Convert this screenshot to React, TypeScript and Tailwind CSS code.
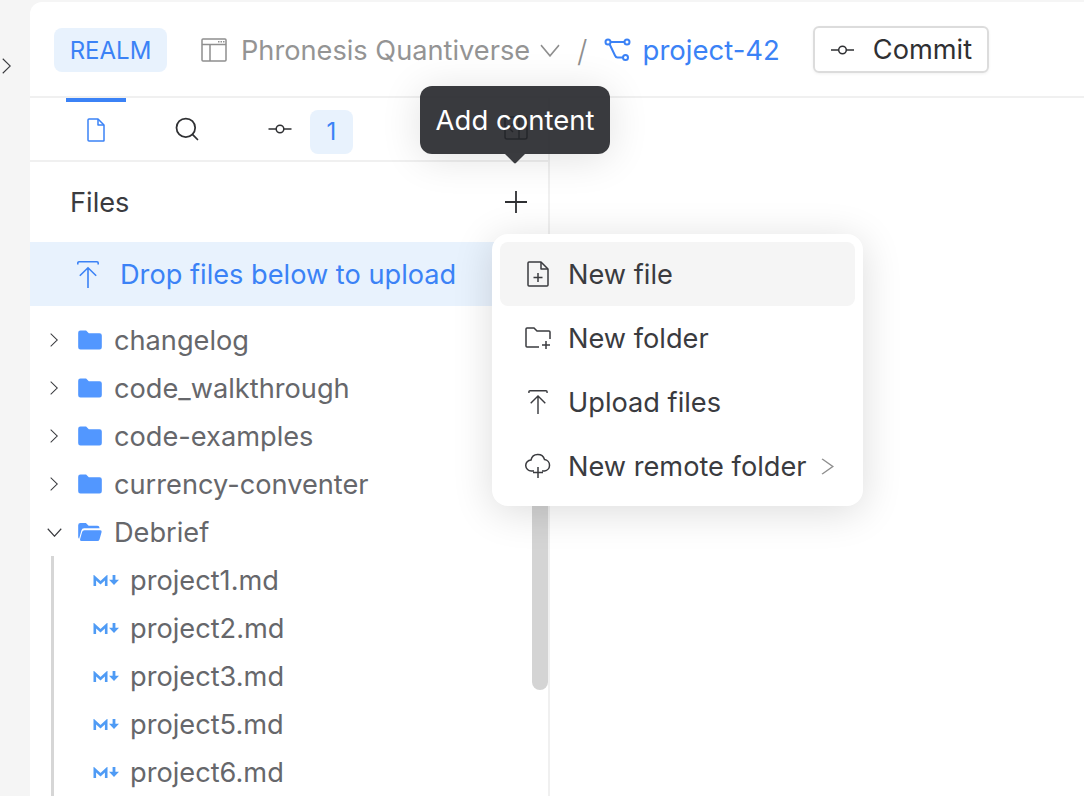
import type { ReactNode } from "react";
import { Search } from "lucide-react";

const SANS = "font-['Inter','Liberation_Sans',sans-serif]";

function CommitIcon({ className = "" }: { className?: string }) {
  return (
    <svg viewBox="0 0 24 12" fill="none" stroke="currentColor" strokeWidth="1.5" className={className}>
      <circle cx="12" cy="6" r="3.8" />
      <path d="M0.5 6h7.500M16 6h7.500" />
    </svg>
  );
}

function UploadIcon({ className = "" }: { className?: string }) {
  return (
    <svg viewBox="0 0 22 27" fill="none" stroke="currentColor" strokeWidth="1.6" className={className}>
      <path d="M.8 3.500V2A1.200 1.200 0 0 1 2 .8h18A1.200 1.200 0 0 1 21.200 2v1.500" />
      <path d="M11 27V7M2.800 14.800 11 6.800l8.200 8" />
    </svg>
  );
}

function Chevron({ dir, className = "" }: { dir: "right" | "down"; className?: string }) {
  if (dir === "down") {
    return (
      <svg viewBox="0 0 20 12" fill="none" stroke="currentColor" strokeWidth="1.5" preserveAspectRatio="none" className={className}>
        <path d="M1 1l9 10 9-10" />
      </svg>
    );
  }
  return (
    <svg viewBox="0 0 12 20" fill="none" stroke="currentColor" strokeWidth="1.5" preserveAspectRatio="none" className={className}>
      <path d="M1 1l10 9-10 9" />
    </svg>
  );
}

function FolderIcon({ open = false }: { open?: boolean }) {
  if (open) {
    return (
      <svg viewBox="0 0 26 22" className="h-[20px] w-[26px] shrink-0">
        <path fill="#5297ff" d="M0 3.500A2.500 2.500 0 0 1 2.500 1h6l3 3h9.500A2.500 2.500 0 0 1 23.500 6.500V7H6.500A3 3 0 0 0 3.600 9.200L1 18.500A3 3 0 0 1 0 16.500Z" />
        <path fill="#5297ff" d="M6.800 9h17.500a1.500 1.500 0 0 1 1.450 1.900l-2.300 8.300A2.500 2.500 0 0 1 21 21H3.500a1.500 1.500 0 0 1-1.450-1.900L4.400 10.800A2.500 2.500 0 0 1 6.800 9Z" />
      </svg>
    );
  }
  return (
    <svg viewBox="0 0 26 22" className="h-[20px] w-[26px] shrink-0">
      <path fill="#5297ff" d="M0 3A2.500 2.500 0 0 1 2.500 .5h6.200l3 3h11.800A2.500 2.500 0 0 1 26 6v13a2.500 2.500 0 0 1-2.500 2.500h-21A2.500 2.500 0 0 1 0 19Z" />
    </svg>
  );
}

function MarkdownIcon() {
  return (
    <svg viewBox="0 0 26 11" className="h-[11px] w-[26px] shrink-0">
      <path fill="none" stroke="#4f9bf5" strokeWidth="2.600" d="M1.800 11V2.500L7.500 7.800l5.700-5.300V11" />
      <path fill="#4f9bf5" d="M19.600 0h2.800v4.800H26L21 10 16 4.800h3.600Z" />
    </svg>
  );
}

function FolderRow({ name, open = false }: { name: string; open?: boolean }) {
  return (
    <div className="flex h-12 items-center">
      <div className="flex w-[32px] shrink-0 justify-end">
        {open ? (
          <Chevron dir="down" className="h-[9px] w-[15px] text-[#3a3b3f]" />
        ) : (
          <Chevron dir="right" className="mr-[4px] h-[14px] w-[8px] text-[#3a3b3f]" />
        )}
      </div>
      <div className="ml-[15px] mr-[11px] flex">
        <FolderIcon open={open} />
      </div>
      <span className="pt-[2px] text-[27.200px] leading-none text-[#66676b]">{name}</span>
    </div>
  );
}

function FileRow({ name }: { name: string }) {
  return (
    <div className="flex h-12 items-center pl-[63px]">
      <MarkdownIcon />
      <span className="ml-[11px] pt-[2px] text-[27.200px] leading-none text-[#66676b]">{name}</span>
    </div>
  );
}

function MenuItem({ icon, label, active = false, arrow = false }: { icon: ReactNode; label: string; active?: boolean; arrow?: boolean }) {
  return (
    <div className={`flex h-16 items-center rounded-[8px] pl-[24px] ${active ? "bg-[#f5f5f5]" : ""}`}>
      <div className="flex w-[28px] justify-center text-[#3a3b3f]">{icon}</div>
      <span className="ml-[16px] pt-[2px] text-[27.200px] leading-none text-[#3a3b3f]">{label}</span>
      {arrow && <Chevron dir="right" className="ml-[14px] h-[17px] w-[13px] text-[#8e8e8e]" />}
    </div>
  );
}

export default function App() {
  return (
    <div className={`${SANS} flex h-[796px] w-[1084px] overflow-hidden bg-[#f5f5f5]`}>
      <div className="flex w-[30px] shrink-0 items-start pl-[2px] pt-[58px]">
        <Chevron dir="right" className="h-[16px] w-[9px] text-[#3a3b3f]" />
      </div>
      <div className="relative mt-[2px] min-w-0 flex-1 rounded-tl-[12px] bg-white">
        <header className="flex h-[96px] items-center border-b-2 border-[#f0f0f0] pt-[2px] pl-[24px]">
          <div className="flex h-[44px] w-[113px] items-center justify-center rounded-[8px] bg-[#e8f2fd] pt-[2px] text-[24px] text-[#3b82f6]">REALM</div>
          <svg viewBox="0 0 26 24" fill="none" stroke="#8f8f8f" strokeWidth="1.500" className="ml-[33px] h-[24px] w-[28px]">
            <rect x="1" y="1" width="24" height="22" rx="1" />
            <path d="M1 6.500h24M9 6.500V23" />
            <path d="M17 3.800h1.500M19.500 3.800H21M22 3.800h1.500" />
          </svg>
          <span className="ml-[13px] pt-[2px] text-[27.200px] text-[#949494]">Phronesis Quantiverse</span>
          <Chevron dir="down" className="ml-[10px] h-[13px] w-[20px] text-[#8f8f8f]" />
          <span className="ml-[17px] pt-[2px] text-[30px] font-light text-[#8f8f8f]">/</span>
          <svg viewBox="0 0 26 24" fill="none" stroke="#3b82f6" strokeWidth="2" className="ml-[16px] h-[24px] w-[27px]">
            <circle cx="3.500" cy="4" r="2.500" />
            <circle cx="22.500" cy="4" r="2.500" />
            <circle cx="21" cy="19.500" r="2.500" />
            <path d="M6 4h14M5 6l5.500 11.500c.500 1.200 1.200 2 2.500 2h5.500" />
          </svg>
          <span className="ml-[12px] pt-[2px] text-[27.500px] text-[#3b82f6]">project-42</span>
          <div className="ml-[33px] mt-[-1px] flex h-[47px] w-[176px] items-center rounded-[6px] border-2 border-[#dcdcdc] pl-[15px] shadow-[0_1px_3px_rgba(0,0,0,0.06)]">
            <CommitIcon className="h-[12px] w-[25px] text-[#2f3033]" />
            <span className="ml-[18px] pt-[2px] text-[27.200px] text-[#2f3033]">Commit</span>
          </div>
        </header>

        <aside className="relative h-[700px] w-[520px] overflow-hidden border-r-2 border-[#f0f0f0]">
          <div className="flex h-[64px] items-center border-b-2 border-[#f0f0f0]">
            <div className="relative ml-[36px] flex h-full w-[60px] items-center justify-center">
              <div className="absolute left-0 top-0 h-[4px] w-full bg-[#3b82f6]" />
              <svg viewBox="0 0 18 24" fill="none" stroke="#3b82f6" strokeWidth="1.500" className="mt-[2px] h-[24px] w-[18px]" strokeLinejoin="round">
                <path d="M2 1h9l6 6v15.500a.5.500 0 0 1-.5.500H2a1 1 0 0 1-1-1V2a1 1 0 0 1 1-1Z" />
                <path d="M11 1v6h6" />
              </svg>
            </div>
            <Search className="ml-[47px] h-[28px] w-[28px] text-[#2f3033]" strokeWidth={1.500} />
            <CommitIcon className="ml-[67px] h-[12px] w-[24px] text-[#2f3033]" />
            <div className="ml-[18px] mt-[6px] flex h-[44px] w-[43px] items-center justify-center rounded-[8px] bg-[#e8f2fd] text-[24px] text-[#3b82f6]">1</div>
            {/* collapse toggle, seen through the tooltip */}
            <svg viewBox="0 0 24 24" fill="none" stroke="#2f3033" strokeWidth="1.500" className="ml-[151px] mt-[-2px] h-[24px] w-[24px]">
              <rect x="1" y="1" width="22" height="22" rx="2" />
              <path d="M15 1v22M9 8l-4 4 4 4" />
            </svg>
          </div>

          <div className="flex h-[80px] items-center justify-between pl-[40px] pr-[20px]">
            <span className="pt-[3px] text-[27.200px] text-[#3a3b3f]">Files</span>
            <svg viewBox="0 0 24 24" fill="none" stroke="#2f3033" strokeWidth="1.800" className="h-[24px] w-[24px]">
              <path d="M12 1v22M1 12h22" />
            </svg>
          </div>

          <div className="flex h-[64px] items-center bg-[#e8f2fd] pl-[47px] text-[#3b82f6]">
            <UploadIcon className="h-[27px] w-[22px]" />
            <span className="ml-[21px] pt-[2px] text-[27.200px] leading-none">Drop files below to upload</span>
          </div>

          <div className="relative pt-[10px]">
            <FolderRow name="changelog" />
            <FolderRow name="code_walkthrough" />
            <FolderRow name="code-examples" />
            <FolderRow name="currency-conventer" />
            <FolderRow name="Debrief" open />
            <div className="absolute bottom-[-30px] left-[21px] top-[250px] w-[3px] bg-[#d6d6d6]" />
            <FileRow name="project1.md" />
            <FileRow name="project2.md" />
            <FileRow name="project3.md" />
            <FileRow name="project5.md" />
            <FileRow name="project6.md" />
          </div>
        </aside>

        {/* scrollbar sits under the popover */}
        <div className="absolute left-[502px] top-[300px] h-[388px] w-[16px] rounded-full bg-[#d4d4d4]" />

        <div className="absolute left-[390px] top-[84px] flex h-[68px] w-[190px] items-center justify-center rounded-[12px] bg-[#242529]/90 pt-[2px] text-[27.500px] text-white shadow-[0_4px_40px_rgba(0,0,0,0.12)]">
          Add content
          <div className="absolute -bottom-[7px] left-[87px] h-[16px] w-[16px] rotate-45 rounded-[2px] bg-[#3a3b3f] [clip-path:polygon(100%_0,100%_100%,0_100%)]" />
        </div>

        <div className="absolute left-[462px] top-[232px] w-[371px] rounded-[16px] bg-white p-[8px] shadow-[0_6px_40px_rgba(0,0,0,0.14)]">
          <MenuItem
            active
            label="New file"
            icon={
              <svg viewBox="0 0 22 26" fill="none" stroke="currentColor" strokeWidth="1.500" strokeLinejoin="round" className="h-[26px] w-[22px]">
                <path d="M2 1h12l7 7v16a1 1 0 0 1-1 1H2a1 1 0 0 1-1-1V2a1 1 0 0 1 1-1Z" />
                <path d="M14 1v7h7M11 12v9M6.500 16.500h9" />
              </svg>
            }
          />
          <MenuItem
            label="New folder"
            icon={
              <svg viewBox="0 0 26 24" fill="none" stroke="currentColor" strokeWidth="1.500" className="h-[24px] w-[26px]">
                <path d="M14 21H2a1 1 0 0 1-1-1V3a1 1 0 0 1 1-1h7l3 3h12a1 1 0 0 1 1 1v7" />
                <path d="M21 15v8M17 19h8" />
              </svg>
            }
          />
          <MenuItem label="Upload files" icon={<UploadIcon className="h-[24px] w-[20px]" />} />
          <MenuItem
            arrow
            label="New remote folder"
            icon={
              <svg viewBox="0 0 26 26" fill="none" stroke="currentColor" strokeWidth="1.500" className="h-[26px] w-[26px]">
                <path d="M9 18H6.500a5.500 5.500 0 0 1-.5-11A7 7 0 0 1 19.500 6.500 5.800 5.800 0 0 1 19.500 18H17" />
                <path d="M13 14v11M8 19.500h10" />
              </svg>
            }
          />
        </div>
      </div>
    </div>
  );
}
